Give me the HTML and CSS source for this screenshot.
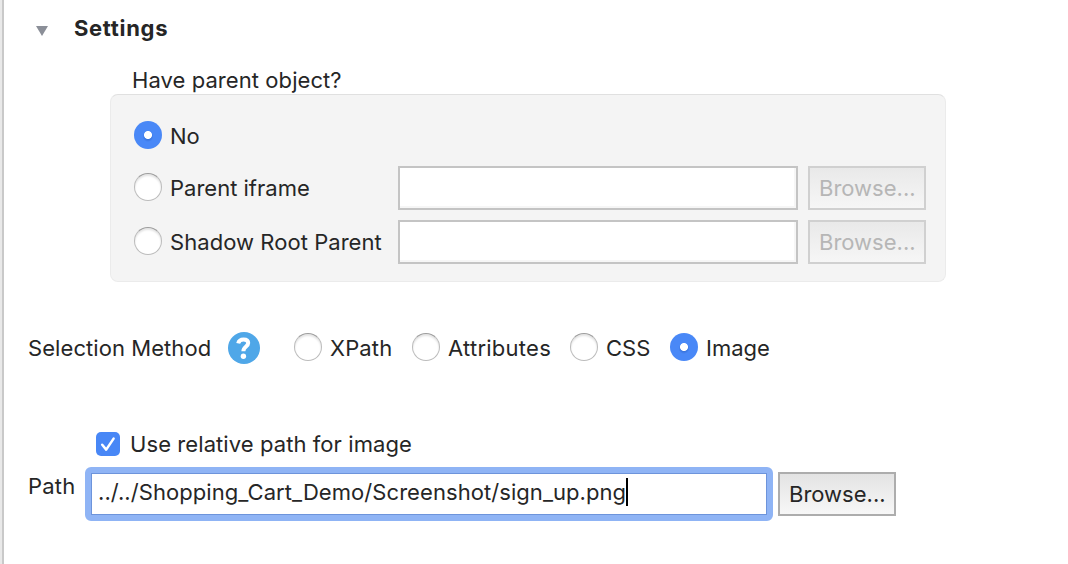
FILE: index.html
```html
<!DOCTYPE html>
<html lang="en">
<head>
<meta charset="utf-8">
<title>Settings</title>
<link rel="stylesheet" href="styles.css">
</head>
<body>
<main class="page">
  <header class="section-head">
    <svg class="arrow" viewBox="0 0 12 10"><path d="M0 0H12L6 10Z"/></svg>
    <h1 class="title">Settings</h1>
  </header>

  <section class="parent">
    <div class="legend"><span class="t-have">Have parent object?</span></div>
    <div class="panel">
      <div class="row row-first">
        <div class="option"><span class="radio on"></span><span class="label">No</span></div>
      </div>
      <div class="row">
        <div class="option"><span class="radio"></span><span class="label">Parent iframe</span></div>
        <div class="field"></div>
        <div class="button disabled">Browse...</div>
      </div>
      <div class="row">
        <div class="option"><span class="radio"></span><span class="label t-shadow">Shadow Root Parent</span></div>
        <div class="field"></div>
        <div class="button disabled">Browse...</div>
      </div>
    </div>
  </section>

  <section class="method">
    <span class="method-name">Selection Method</span>
    <svg class="help" viewBox="0 0 32 32">
      <circle cx="16" cy="16" r="16" fill="#4fa7e8"/>
      <path d="M10.2 11.4C10.8 8.8 12.9 7.4 15.6 7.4C18.6 7.4 20.2 9 20.2 11.1C20.2 14.6 15.4 14.4 15.4 19.2" fill="none" stroke="#fff" stroke-width="4"/>
      <circle cx="15.4" cy="24.2" r="2.7" fill="#fff"/>
    </svg>
    <div class="option m-xpath"><span class="radio"></span><span class="label t-xpath">XPath</span></div>
    <div class="option m-attr"><span class="radio"></span><span class="label t-attr">Attributes</span></div>
    <div class="option m-css"><span class="radio"></span><span class="label">CSS</span></div>
    <div class="option"><span class="radio on"></span><span class="label">Image</span></div>
  </section>

  <section class="relative-path">
    <svg class="check" viewBox="0 0 24 24">
      <rect width="24" height="24" rx="5" fill="#4887f6"/>
      <path d="M6.2 12.8L10.2 17.6L17.6 6.6" fill="none" stroke="#fff" stroke-width="2.5" stroke-linecap="round" stroke-linejoin="round"/>
    </svg>
    <span class="t-relative">Use relative path for image</span>
  </section>

  <section class="path">
    <span class="path-name">Path</span>
    <div class="path-input"><span class="t-value">../../Shopping_Cart_Demo/Screenshot/sign_up.png</span><span class="caret"></span></div>
    <div class="button">Browse...</div>
  </section>
</main>
</body>
</html>
```
FILE: styles.css
```css
* { box-sizing: border-box; }
body {
  margin: 0;
  background: #fff;
  color: #262626;
  font: 22px/28px Inter, "Liberation Sans", sans-serif;
  white-space: nowrap;
}
.page {
  height: 564px;
  overflow: hidden;
  border-left: 2px solid #e9e9e9;
  box-shadow: inset 2px 0 #c9c9c9;
  padding: 14px 0 0 26px;
}
.section-head { display: flex; height: 28px; padding-left: 8px; }
.arrow { width: 12px; height: 10px; margin: 12px 26px 0 0; fill: #8b8f98; }
.title { margin: 0; font-size: 22px; line-height: 28px; font-weight: 700; letter-spacing: 0.68px; }

.parent { width: 836px; margin: 24px 0 0 82px; }
.legend { height: 28px; padding-left: 22px; }
.t-have { letter-spacing: 0.07px; }
.panel {
  display: flex;
  flex-direction: column;
  gap: 10px;
  height: 188px;
  padding: 26px 19px 0 23px;
  border: 1px solid #ebebeb;
  border-top-color: #e0e0e0;
  border-radius: 8px;
  background: #f4f4f4;
}
.row { display: flex; align-items: center; height: 44px; }
.row-first { height: 35px; align-items: flex-start; }
.option { display: flex; gap: 8px; height: 30px; }
.row .option { width: 264px; }
.label { padding-top: 1px; }
.t-shadow { letter-spacing: 0.05px; }
.t-xpath { letter-spacing: 0.15px; }
.t-attr { letter-spacing: 0.26px; }
.radio {
  width: 28px;
  height: 28px;
  flex: none;
  border-radius: 50%;
  border: 1px solid #bcbcbc;
  border-top-color: #9c9c9c;
  background: #fff;
  box-shadow: inset 0 2px 2px #e4e4e4;
}
.radio.on {
  border: 0;
  background: radial-gradient(circle at 14px 14px, #fff 3.6px, transparent 4.4px), radial-gradient(circle at 14px 15.5px, #3670d8 2.5px, #4988f7 5.5px);
  box-shadow: none;
}
.field {
  width: 400px;
  height: 44px;
  margin-right: 10px;
  border: 2px solid #c4c4c4;
  background: #fff;
  box-shadow: inset -2px -2px #f6f6f6;
}
.button {
  width: 118px;
  height: 44px;
  flex: none;
  padding: 6px 0 0 9px;
  border: 2px solid #adadad;
  background: linear-gradient(#e3e3e3, #f7f7f7);
}
.disabled { border-color: #d0d0d0; background: linear-gradient(#e9e9e9, #f6f6f6); color: #b6b6b6; }

.method { display: flex; height: 32px; margin-top: 50px; }
.method-name { width: 200px; padding-top: 2px; letter-spacing: 0.07px; }
.help { width: 32px; height: 32px; margin-right: 34px; }
.method .option { padding-top: 1px; }
.m-xpath { width: 118px; }
.m-attr { width: 158px; }
.m-css { width: 100px; }

.relative-path { display: flex; gap: 10px; height: 28px; margin: 66px 0 0 68px; }
.check { width: 24px; height: 24px; margin-top: 2px; }
.t-relative { letter-spacing: 0.08px; }

.path { display: flex; height: 54px; margin-top: 9px; }
.path-name { width: 57px; padding-top: 5px; letter-spacing: 0.2px; }
.path-input {
  display: flex;
  width: 688px;
  height: 54px;
  margin-right: 5px;
  padding: 5px 0 0 7px;
  border: 6px solid #8fb4f5;
  border-radius: 6px;
  box-shadow: inset 0 0 0 1px #6d94db;
}
.t-value { letter-spacing: 0.065px; }
.path .button { margin-top: 5px; }
.caret { width: 2px; height: 28px; background: #000; }
```
